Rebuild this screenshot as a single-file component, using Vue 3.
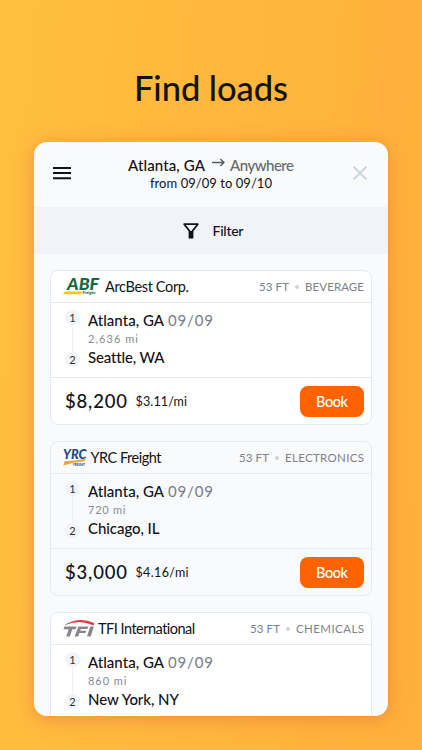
<script setup>
const loads = [
  {
    logo: 'abf', name: 'ArcBest Corp.', nameWidth: 84, cargo: '53 FT', kind: 'BEVERAGE', kindWidth: 59,
    distance: '2,636 mi', distanceWidth: 50, to: 'Seattle, WA', toWidth: 76,
    price: '$8,200', rate: '$3.11/mi', rateWidth: 51.5,
  },
  {
    logo: 'yrc', name: 'YRC Freight', nameWidth: 71, cargo: '53 FT', kind: 'ELECTRONICS', kindWidth: 79,
    distance: '720 mi', distanceWidth: 37.5, to: 'Chicago, IL', toWidth: 71.5,
    price: '$3,000', rate: '$4.16/mi', rateWidth: 53, muted: true,
  },
  {
    logo: 'tfi', name: 'TFI International', nameWidth: 97.5, cargo: '53 FT', kind: 'CHEMICALS', kindWidth: 68,
    distance: '860 mi', distanceWidth: 38.5, to: 'New York, NY', toWidth: 91,
  },
]

// Tracks a label out or in so that it spans the given width.
const vFit = {
  mounted(el, { value }) {
    const count = el.textContent.length - 1
    const tracking = (value - el.getBoundingClientRect().width) / count
    el.style.letterSpacing = `${tracking}px`
    el.style.marginRight = `${-tracking}px`
  },
}
</script>

<template>
  <main class="page">
    <h1 class="title"><span v-fit="154" class="t">Find loads</span></h1>
    <section class="panel">
      <header class="top">
        <svg class="menu" width="18" height="14" viewBox="0 0 18 14">
          <path d="M0 2h18M0 7.1h18M0 12.2h18" stroke="#111216" stroke-width="2" />
        </svg>
        <div class="route">
          <div class="route-line">
            <span v-fit="77" class="t from">Atlanta, GA</span>
            <svg class="arrow" width="13" height="9" viewBox="0 0 13 9">
              <path d="M0 4.5h12M8.3 1l3.7 3.5L8.3 8" fill="none" stroke="#55575c" stroke-width="1.3" />
            </svg>
            <span v-fit="64" class="t anywhere">Anywhere</span>
          </div>
          <div class="dates"><span v-fit="122" class="t">from 09/09 to 09/10</span></div>
        </div>
        <svg class="close" width="14" height="14" viewBox="0 0 14 14">
          <path d="M.6.6l12.8 12.8M13.4.6L.6 13.4" stroke="#cbd4e0" stroke-width="2" />
        </svg>
      </header>

      <div class="filter">
        <svg width="16" height="16" viewBox="0 0 16 16">
          <path d="M1.2 1.2h13.6L9.5 8v6.7h-3V8z" fill="none" stroke="#111216" stroke-width="1.8" stroke-linejoin="round" />
          <path d="M6.5 8h3v6.7h-3z" fill="#111216" />
        </svg>
        <span v-fit="31" class="t">Filter</span>
      </div>

      <div class="list">
        <article v-for="load in loads" :key="load.name" class="card" :class="{ muted: load.muted }">
          <div class="card-head">
            <svg v-if="load.logo === 'abf'" class="logo abf" width="38" height="18" viewBox="0 0 38 18">
              <text x="4" y="12.3" textLength="32" lengthAdjust="spacingAndGlyphs" class="abf-name">ABF</text>
              <path d="M1.8 13.4h17.4l-1 2.8H0z" fill="#f8c51c" />
              <text x="19.5" y="16.4" textLength="13" lengthAdjust="spacingAndGlyphs" class="abf-sub">Freight</text>
            </svg>
            <svg v-else-if="load.logo === 'yrc'" class="logo yrc" width="24" height="18" viewBox="0 0 24 18">
              <text x="0" y="10.2" textLength="23.5" lengthAdjust="spacingAndGlyphs" class="yrc-name">YRC</text>
              <path d="M1.6 12.2Q11 12 22.6 9.8L21.4 12.3Q10 13 .2 16.6z" fill="#f2a33b" />
              <text x="10" y="16.6" textLength="12" lengthAdjust="spacingAndGlyphs" class="yrc-sub">FREIGHT</text>
            </svg>
            <svg v-else class="logo tfi" width="32" height="18" viewBox="0 0 32 18">
              <path d="M1 5.6Q15-4 31.2 3L30.6 5.6Q16-1.6 1 5.6z" fill="#df3a40" />
              <g fill="#85878b">
                <path d="M1.5 6.5h12.2l-1 2.7H9.3L6.8 16.6H3.2l2.5-7.4H.4z" />
                <path d="M15.4 6.5h10l-1 2.5h-6.6l-.6 1.7h6l-.8 2.3h-6l-1.2 3.6h-3.6z" />
                <path d="M27.2 6.5h3.7l-3.2 10.1H24z" />
              </g>
            </svg>
            <span v-fit="load.nameWidth" class="t name">{{ load.name }}</span>
            <div class="meta">
              <span v-fit="30" class="t">{{ load.cargo }}</span>
              <i class="dot"></i>
              <span v-fit="load.kindWidth" class="t">{{ load.kind }}</span>
            </div>
          </div>
          <div class="stops">
            <div class="track">
              <span class="badge">1</span>
              <i class="rail"></i>
              <span class="badge">2</span>
            </div>
            <div class="places">
              <div class="place">
                <span v-fit="76" class="t">Atlanta, GA</span>
                <span v-fit="45" class="t day">09/09</span>
              </div>
              <div class="distance"><span v-fit="load.distanceWidth" class="t">{{ load.distance }}</span></div>
              <div class="place"><span v-fit="load.toWidth" class="t">{{ load.to }}</span></div>
            </div>
          </div>
          <footer v-if="load.price" class="card-foot">
            <span v-fit="62" class="t price">{{ load.price }}</span>
            <span v-fit="load.rateWidth" class="t rate">{{ load.rate }}</span>
            <button class="book"><span v-fit="32" class="t">Book</span></button>
          </footer>
        </article>
      </div>
    </section>
  </main>
</template>

<style>
body {
  margin: 0;
}
</style>

<style scoped>
.page {
  box-sizing: border-box;
  width: 422px;
  height: 750px;
  padding: 68px 34px 0;
  overflow: hidden;
  background: linear-gradient(95deg, #ffbf3f, #ffaf3a);
  font-family: Lato, sans-serif;
  color: #111216;
}
.t {
  display: inline-block;
  white-space: nowrap;
}
.title {
  margin: 0 0 34px;
  font-size: 34.5px;
  line-height: 40px;
  font-weight: 500;
  text-align: center;
  color: #151208;
}
.panel {
  width: 354px;
  height: 573.5px;
  overflow: hidden;
  border-radius: 13px;
  background: #f9fafc;
  box-shadow: 0 3px 18px rgba(226, 112, 66, 0.55);
}
.top {
  display: grid;
  grid-template-columns: 50px 1fr 50px;
  height: 65px;
}
.menu {
  margin: 24px 0 0 19px;
}
.close {
  margin: 24px 0 0 15px;
}
.route {
  display: flex;
  flex-direction: column;
  align-items: center;
  padding-top: 14px;
}
.route-line {
  display: flex;
  font-size: 15px;
  line-height: 18px;
  font-weight: 500;
}
.arrow {
  margin: 2px 5px 0 7px;
}
.anywhere {
  color: #66686d;
}
.dates {
  font-size: 13px;
  line-height: 18px;
}
.filter {
  display: flex;
  align-items: center;
  height: 47px;
  padding-left: 148.5px;
  gap: 14px;
  background: #f0f3f8;
  font-size: 14px;
  font-weight: 500;
}
.list {
  display: grid;
  gap: 16px;
  padding: 16px 16px 0;
}
.card {
  box-sizing: border-box;
  height: 155px;
  border: 1px solid #e5e9f2;
  border-radius: 8px;
  background: #fff;
}
.card.muted {
  background: #f9fafc;
}
.card-head {
  display: flex;
  height: 31px;
  padding: 0 7px 0 12px;
  border-bottom: 1px solid #e5e9f2;
  line-height: 31px;
}
.logo {
  flex: none;
  margin-top: 7px;
  overflow: visible;
}
.abf {
  margin-right: 4px;
}
.yrc {
  margin-right: 3.5px;
}
.tfi {
  margin-right: 3px;
}
.abf-name {
  font: italic 900 16.5px Lato, sans-serif;
  fill: #17693b;
}
.abf-sub {
  font: italic 900 4.5px Lato, sans-serif;
  fill: #17693b;
}
.yrc-name {
  font: italic 900 13.5px Lato, sans-serif;
  fill: #1d4b87;
}
.yrc-sub {
  font: italic 900 3px Lato, sans-serif;
  fill: #1d4b87;
}
.name {
  font-size: 14.5px;
}
.meta {
  display: flex;
  align-items: center;
  margin-left: auto;
  height: 31px;
  font-size: 11.5px;
  color: #7c818c;
}
.dot {
  width: 4px;
  height: 4px;
  margin: 0 6px;
  border-radius: 50%;
  background: #ced2d9;
}
.stops {
  display: flex;
  gap: 8px;
  height: 67px;
  padding: 7px 14px 0;
  border-bottom: 1px solid #e5e9f2;
}
.track {
  display: flex;
  flex-direction: column;
  align-items: center;
  height: 57px;
}
.badge {
  width: 15px;
  height: 15px;
  border-radius: 50%;
  background: #f0f3f8;
  font-size: 11px;
  line-height: 15px;
  text-align: center;
  color: #2c2e34;
}
.rail {
  flex: 1;
  width: 1px;
  background: #edf0f6;
}
.place {
  display: flex;
  gap: 4px;
  font-size: 15px;
  line-height: 20px;
  font-weight: 500;
}
.day {
  font-weight: 400;
  color: #777b84;
}
.distance {
  height: 17px;
  font-size: 11px;
  line-height: 17px;
  color: #858a94;
}
.card-foot {
  display: flex;
  align-items: center;
  height: 46px;
  padding: 0 7px 0 14px;
}
.price {
  font-size: 18.5px;
  font-weight: 500;
}
.card-foot .rate {
  margin-left: 8.5px;
  font-size: 12.5px;
}
.book {
  width: 64px;
  height: 31px;
  margin: 1px 0 0 auto;
  padding: 0;
  border: 0;
  border-radius: 8px;
  background: #ff6200;
  color: #fff;
  font: 500 14.5px Lato, sans-serif;
}
</style>
